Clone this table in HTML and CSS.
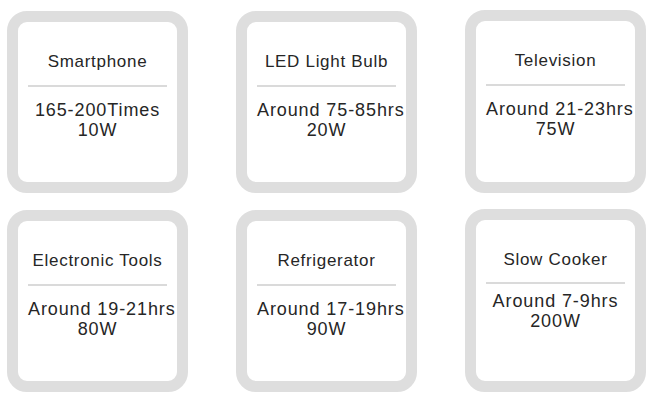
FILE: index.html
```html
<!DOCTYPE html>
<html lang="en">
<head>
<meta charset="utf-8">
<title>Charging</title>
<link rel="stylesheet" href="styles.css">
</head>
<body>
<div class="grid">
  <div class="card">
    <div class="title">Smartphone</div>
    <div class="rule"></div>
    <div class="body">165-200Times<br>10W</div>
  </div>
  <div class="card">
    <div class="title">LED Light Bulb</div>
    <div class="rule"></div>
    <div class="body">Around 75-85hrs<br>20W</div>
  </div>
  <div class="card card-up">
    <div class="title">Television</div>
    <div class="rule"></div>
    <div class="body">Around 21-23hrs<br>75W</div>
  </div>
  <div class="card">
    <div class="title">Electronic Tools</div>
    <div class="rule"></div>
    <div class="body">Around 19-21hrs<br>80W</div>
  </div>
  <div class="card">
    <div class="title">Refrigerator</div>
    <div class="rule"></div>
    <div class="body">Around 17-19hrs<br>90W</div>
  </div>
  <div class="card card-up card-tight">
    <div class="title">Slow Cooker</div>
    <div class="rule"></div>
    <div class="body">Around 7-9hrs<br>200W</div>
  </div>
</div>
</body>
</html>
```

FILE: styles.css
```css
html, body {
  margin: 0;
  padding: 0;
  background: #ffffff;
}

body {
  font-family: "Liberation Sans", Arial, sans-serif;
  color: #262626;
}

.grid {
  display: grid;
  grid-template-columns: repeat(3, 181px);
  grid-auto-rows: 182px;
  column-gap: 48px;
  row-gap: 17px;
  padding: 11px 0 0 7px;
}

.card {
  box-sizing: border-box;
  border: 11px solid #dedede;
  border-radius: 20px;
  background: #ffffff;
  padding: 30px 10px 0;
  text-align: center;
}

.card-up {
  margin-top: -1px;
}

.title {
  font-size: 17px;
  line-height: 20px;
  letter-spacing: 0.7px;
  white-space: nowrap;
}

.rule {
  height: 2px;
  background: #dadada;
  margin-top: 13px;
}

.body {
  font-size: 18px;
  line-height: 20px;
  letter-spacing: 0.9px;
  margin-top: 13px;
  white-space: nowrap;
}

.card-tight .rule {
  margin-top: 12px;
}

.card-tight .body {
  margin-top: 7px;
}
```
